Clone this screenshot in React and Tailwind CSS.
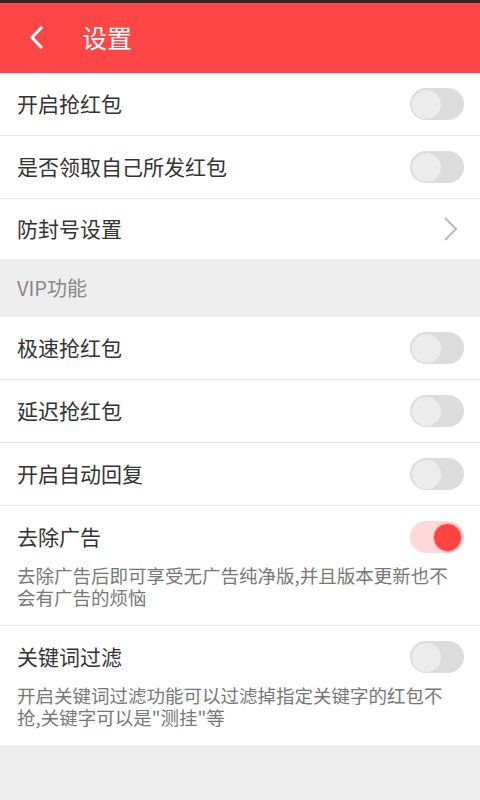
import React from "react";

const font = { fontFamily: '"Noto Sans CJK SC", "Noto Sans", sans-serif' };

const Toggle = ({ on }) => (
  <div
    className={
      "w-[54px] h-[32px] rounded-full flex items-center px-[2px] " +
      (on ? "bg-[#fdd9d9] justify-end" : "bg-[#dcdcdc] justify-start")
    }
  >
    <div
      className={
        "w-[29px] h-[29px] rounded-full " +
        (on ? "bg-[#ff4242] border border-[#ffb0b0]" : "bg-[#ececec]")
      }
    />
  </div>
);

const Row = ({ label, right, desc, divider = true, h = "h-[62px]" }) => (
  <div className={"bg-white " + (divider ? "border-b border-[#e6e6e6]" : "")}>
    <div className={"flex items-center justify-between pl-[17px] pr-[16px] " + h}>
      <span className="text-[21px] text-[#333333]">{label}</span>
      {right}
    </div>
    {desc && (
      <div className="pl-[17px] pr-[27px] -mt-[4px] pb-[17px] text-[18.5px] leading-[22px] text-[#777777]">
        {desc}
      </div>
    )}
  </div>
);

const Chevron = () => (
  <svg width="18" height="28" viewBox="0 0 18 28" className="mr-[4px]">
    <polyline points="3,3 14,14 3,25" fill="none" stroke="#bbbbbb" strokeWidth="2.2" />
  </svg>
);

export default function App() {
  return (
    <div className="w-[480px] min-h-[800px] bg-[#eeeeee]" style={font}>
      <div className="h-[3px] bg-[#2a2a2a]" />
      <div className="h-[70px] bg-[#ff4646] flex items-center">
        <svg width="20" height="28" viewBox="0 0 20 28" className="ml-[27px]">
          <polyline points="15,3 5,13.5 15,24" fill="none" stroke="#ffffff" strokeWidth="3.2" />
        </svg>
        <span className="ml-[35px] text-[25px] text-white">设置</span>
      </div>

      <Row label="开启抢红包" right={<Toggle />} />
      <Row label="是否领取自己所发红包" right={<Toggle />} />
      <Row label="防封号设置" right={<Chevron />} divider={false} h="h-[60px]" />

      <div className="h-[58px] flex items-center pl-[17px] text-[20px] text-[#888888]">
        VIP功能
      </div>

      <Row label="极速抢红包" right={<Toggle />} />
      <Row label="延迟抢红包" right={<Toggle />} />
      <Row label="开启自动回复" right={<Toggle />} />
      <Row
        label="去除广告"
        right={<Toggle on />}
        desc="去除广告后即可享受无广告纯净版,并且版本更新也不会有广告的烦恼"
      />
      <Row
        label="关键词过滤"
        right={<Toggle />}
        divider={false}
        desc={'开启关键词过滤功能可以过滤掉指定关键字的红包不抢,关键字可以是"测挂"等'}
      />
    </div>
  );
}
